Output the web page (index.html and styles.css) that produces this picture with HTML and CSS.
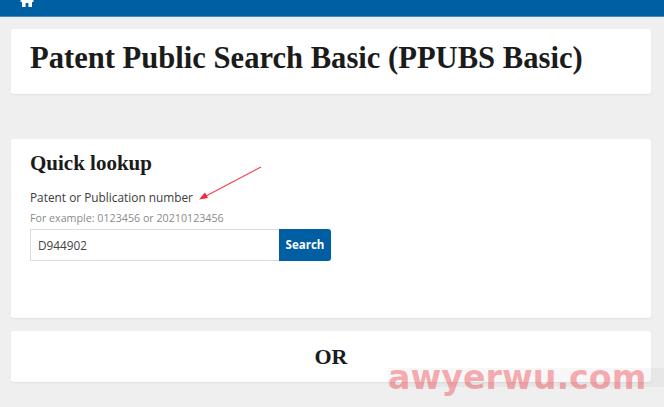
FILE: index.html
```html
<!DOCTYPE html>
<html lang="en">
<head>
    <meta charset="UTF-8">
    <title>Patent Public Search Basic</title>
    <link rel="stylesheet" href="styles.css">
</head>
<body>
<div class="topbar">
    <svg class="home" width="14" height="12" viewBox="0 0 14 12">
        <path d="M7 0 L14 6 L12.6 7.2 L12 6.7 V12 H8.4 V8 H5.6 V12 H2 V6.7 L1.4 7.2 L0 6 Z" fill="#fff"/>
    </svg>
</div>
<div class="page">
    <div class="card title-card">
        <h1>Patent Public Search Basic (PPUBS Basic)</h1>
    </div>
    <div class="card lookup">
        <h2>Quick lookup</h2>
        <label for="t1">Patent or Publication number</label>
        <p class="hint">For example: 0123456 or 20210123456</p>
        <div class="search-row">
            <input type="text" id="t1" value="D944902"/>
            <span class="search-btn">Search</span>
        </div>
    </div>
    <div class="card or-card">OR</div>
</div>
<svg class="arrow" width="70" height="36" viewBox="0 0 70 36">
    <path d="M63 1 L8 30" stroke="#f0414f" stroke-width="1.1" fill="none"/>
    <path d="M1 33.5 L7 26.5 L10 32 Z" fill="#f0283c"/>
</svg>
<div class="watermark">awyerwu.com</div>
</body>
</html>
```

FILE: styles.css
```css
html,body{
    height: 100%;
    overflow: hidden;
}
*{
    margin:0;
    padding:0;
    box-sizing: border-box;
}
body{
    position: relative;
    background: #efefef;
    font-family: "Open Sans", "Noto Sans", sans-serif;
    color: #333;
}
.topbar{
    height: 17px;
    background: #005ea2;
    border-bottom: 1px solid #3f8cc0;
    padding-left: 20px;
    overflow: hidden;
}
.home{
    display: block;
    margin-top: -5px;
}
.page{
    padding: 12px 13px 0 11px;
}
.card{
    background: #fff;
    border-radius: 3px;
    box-shadow: 0 1px 2px rgba(0,0,0,.06);
}
.title-card{
    height: 65px;
    padding: 11px 19px 0;
}
.title-card h1{
    font-family: "Liberation Serif", serif;
    font-size: 30.6px;
    line-height: 36px;
    color: #1b1b1b;
    white-space: nowrap;
}
.lookup{
    height: 179px;
    margin-top: 45px;
    padding: 12px 19px 0;
}
.lookup h2{
    font-family: "Liberation Serif", serif;
    font-size: 21px;
    line-height: 24px;
    color: #1b1b1b;
}
.lookup label{
    display: block;
    margin-top: 13px;
    font-size: 11.85px;
    line-height: 18px;
    color: #3d3d3d;
}
.hint{
    margin-top: 5px;
    font-size: 10.7px;
    line-height: 14px;
    color: #8a8a8a;
}
.search-row{
    display: flex;
    width: 301px;
    height: 32px;
    margin-top: 4px;
}
.search-row input{
    width: 249px;
    height: 32px;
    padding-left: 7px;
    border: 1px solid #dcdcdc;
    border-right: none;
    font-family: inherit;
    font-size: 11.8px;
    color: #444;
    outline: none;
}
.search-btn{
    width: 52px;
    height: 32px;
    background: #005ea2;
    border-radius: 0 3px 3px 0;
    color: #fff;
    font-size: 11.5px;
    font-weight: bold;
    line-height: 32px;
    text-align: center;
}
.or-card{
    height: 51px;
    margin-top: 13px;
    font-family: "Liberation Serif", serif;
    font-size: 22px;
    font-weight: bold;
    line-height: 51px;
    text-align: center;
    color: #1b1b1b;
}
.arrow{
    position: absolute;
    left: 198px;
    top: 166px;
}
.watermark{
    position: absolute;
    right: 0;
    top: 368px;
    width: 276px;
    height: 19px;
    background: rgba(0,0,0,.03);
    font-family: "DejaVu Sans", sans-serif;
    font-size: 33.3px;
    font-weight: bold;
    line-height: 19px;
    color: rgba(240,60,70,.42);
    white-space: nowrap;
}
```
